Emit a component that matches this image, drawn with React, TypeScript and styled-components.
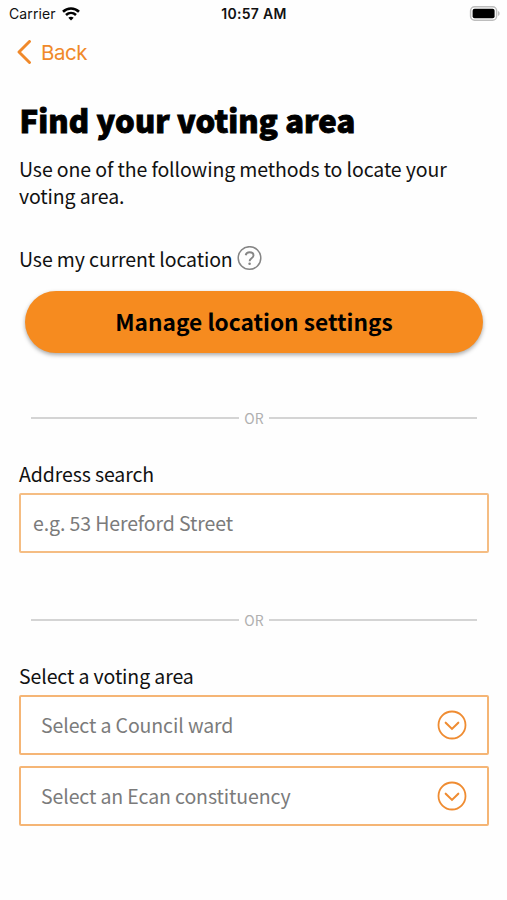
import React from "react";
import styled, { createGlobalStyle } from "styled-components";

const GlobalStyle = createGlobalStyle`
  * { box-sizing: border-box; }
  body { margin: 0; background: #fefefe; }
`;

const humanist = `"Noto Sans CJK SC", "Noto Sans", sans-serif`;
const system = `Inter, "Liberation Sans", sans-serif`;

const Screen = styled.main`
  height: 900px;
  display: flex;
  flex-direction: column;
  overflow: hidden;
  background: #fefefe;
  color: #111;
  font-family: ${humanist};
`;

const StatusBar = styled.header`
  height: 28px;
  padding: 0 7px 0 9px;
  display: grid;
  grid-template-columns: 1fr auto 1fr;
  align-items: center;
  font: 400 14px/28px ${system};
`;

const Carrier = styled.div`
  display: flex;
  align-items: center;
  gap: 6px;
  letter-spacing: 0.1px;
`;

const Time = styled.time`
  margin-right: 1px;
  font-weight: 600;
  letter-spacing: 0.3px;
`;

const BatteryIcon = styled.svg`
  justify-self: end;
  margin-top: -2px;
`;

const BackButton = styled.button`
  align-self: flex-start;
  height: 48px;
  margin: 0;
  padding: 0 17px;
  border: 0;
  background: none;
  display: flex;
  align-items: center;
  gap: 9px;
  color: #f0892a;
  font: 400 20.5px/49px ${system};
  letter-spacing: -0.5px;
`;

const Content = styled.section`
  padding: 23px 18px 0 19px;
  display: flex;
  flex-direction: column;
`;

const Title = styled.h1`
  margin: 0 0 14px;
  padding-left: 0.5px;
  font-size: 31px;
  font-weight: 900;
  line-height: 42px;
  letter-spacing: 0.1px;
  -webkit-text-stroke: 0.9px #000;
  white-space: nowrap;
  color: #000;
`;

const Intro = styled.p`
  width: 440px;
  margin: 0;
  font-size: 19.5px;
  line-height: 27px;
  letter-spacing: -0.11px;
`;

const Label = styled.label<{ $top: number }>`
  margin-top: ${(p) => p.$top}px;
  height: 30px;
  display: flex;
  align-items: center;
  gap: 4px;
  font-size: 19.5px;
  line-height: 30px;
  letter-spacing: -0.11px;
`;

const PrimaryButton = styled.button`
  height: 62px;
  margin: 17px 6px 0;
  padding: 0 0 1px;
  border: 0;
  border-radius: 31px;
  background: #f68b1f;
  box-shadow: 0 2px 4px rgba(0, 0, 0, 0.34);
  color: #000;
  font: 700 22.7px/61px ${humanist};
`;

const Divider = styled.div<{ $top: number }>`
  margin: ${(p) => p.$top}px 12px 0;
  height: 20px;
  display: flex;
  align-items: center;
  gap: 5px;
  color: #b0b0b0;
  font-size: 14px;
  line-height: 20px;

  &::before,
  &::after {
    content: "";
    flex: 1;
    height: 2px;
    background: #d4d4d4;
  }
`;

const AddressInput = styled.input`
  width: 470px;
  height: 60px;
  margin: 4px 0 0;
  padding: 0 12px 1px;
  border: 2px solid #f5bd83;
  border-radius: 2px;
  outline: 0;
  background: #fff;
  font: 400 19.5px/56px ${humanist};
  letter-spacing: -0.11px;
  &::placeholder { color: #7b7b7b; opacity: 1; }
`;

const Picker = styled.button<{ $top: number }>`
  width: 470px;
  height: 60px;
  margin: ${(p) => p.$top}px 0 0;
  padding: 0 20px 0 20px;
  border: 2px solid #f5b575;
  border-radius: 2px;
  background: #fff;
  display: flex;
  align-items: center;
  justify-content: space-between;
  color: #7b7b7b;
  font: 400 19.5px/56px ${humanist};
  letter-spacing: -0.11px;
`;

const ChevronCircle = () => (
  <svg width="30" height="30" viewBox="0 0 30 30" fill="none" stroke="#ef8c32" strokeWidth="1.8">
    <circle cx="15" cy="15" r="13.5" />
    <path d="M8.7 12.700 15 18.900l6.300-6.200" strokeWidth="2.100" strokeLinecap="round" />
  </svg>
);

const HelpIcon = () => (
  <svg width="26" height="26" viewBox="0 0 26 26" fill="none" stroke="#858585" strokeWidth="1.5">
    <circle cx="12.500" cy="12" r="11.300" />
    <path d="M8.700 9.300C9.100 7.400 10.500 6.300 12.600 6.300c2.300 0 3.900 1.200 3.900 3.100 0 2.900-3.900 2.800-3.900 5.800" strokeWidth="1.900" />
    <circle cx="12.600" cy="17.800" r="1.300" fill="#858585" stroke="none" />
  </svg>
);

export default function App() {
  return (
    <Screen>
      <GlobalStyle />
      <StatusBar>
        <Carrier>
          Carrier
          <svg width="18" height="14" viewBox="0 0 18 14" fill="none" stroke="#000" strokeWidth="2.600">
            <path d="M1 4.700C5.500.400 12.500.400 17 4.700" />
            <path d="M4 8c3-2.700 7-2.700 10 0" />
            <path d="M9 13.500 6.300 10.700c1.600-1.300 3.800-1.300 5.400 0Z" fill="#000" stroke="none" />
          </svg>
        </Carrier>
        <Time>10:57 AM</Time>
        <BatteryIcon width="31" height="15" viewBox="0 0 31 15">
          <rect x="1.600" y="0.800" width="26" height="13.400" rx="4" fill="#fff" stroke="#bdbdbd" strokeWidth="1.500" />
          <rect x="3.600" y="2.800" width="22" height="9.400" rx="2" fill="#000" />
          <path d="M29 5v5c2.200-.8 2.200-4.200 0-5Z" fill="#bdbdbd" />
        </BatteryIcon>
      </StatusBar>
      <BackButton>
        <svg width="15" height="24" viewBox="0 0 15 24" fill="none" stroke="#f0892a" strokeWidth="2.900">
          <path d="M12.500 1.500 2 12l10.500 10.500" strokeLinecap="round" strokeLinejoin="round" />
        </svg>
        Back
      </BackButton>
      <Content>
        <Title>Find your voting area</Title>
        <Intro>Use one of the following methods to locate your voting area.</Intro>
        <Label as="div" $top={35}>
          Use my current location
          <HelpIcon />
        </Label>
        <PrimaryButton>Manage location settings</PrimaryButton>
        <Divider $top={55}>OR</Divider>
        <Label htmlFor="address" $top={31}>Address search</Label>
        <AddressInput id="address" placeholder="e.g. 53 Hereford Street" />
        <Divider $top={57}>OR</Divider>
        <Label as="div" $top={31}>Select a voting area</Label>
        <Picker $top={4}>
          Select a Council ward
          <ChevronCircle />
        </Picker>
        <Picker $top={11}>
          Select an Ecan constituency
          <ChevronCircle />
        </Picker>
      </Content>
    </Screen>
  );
}
